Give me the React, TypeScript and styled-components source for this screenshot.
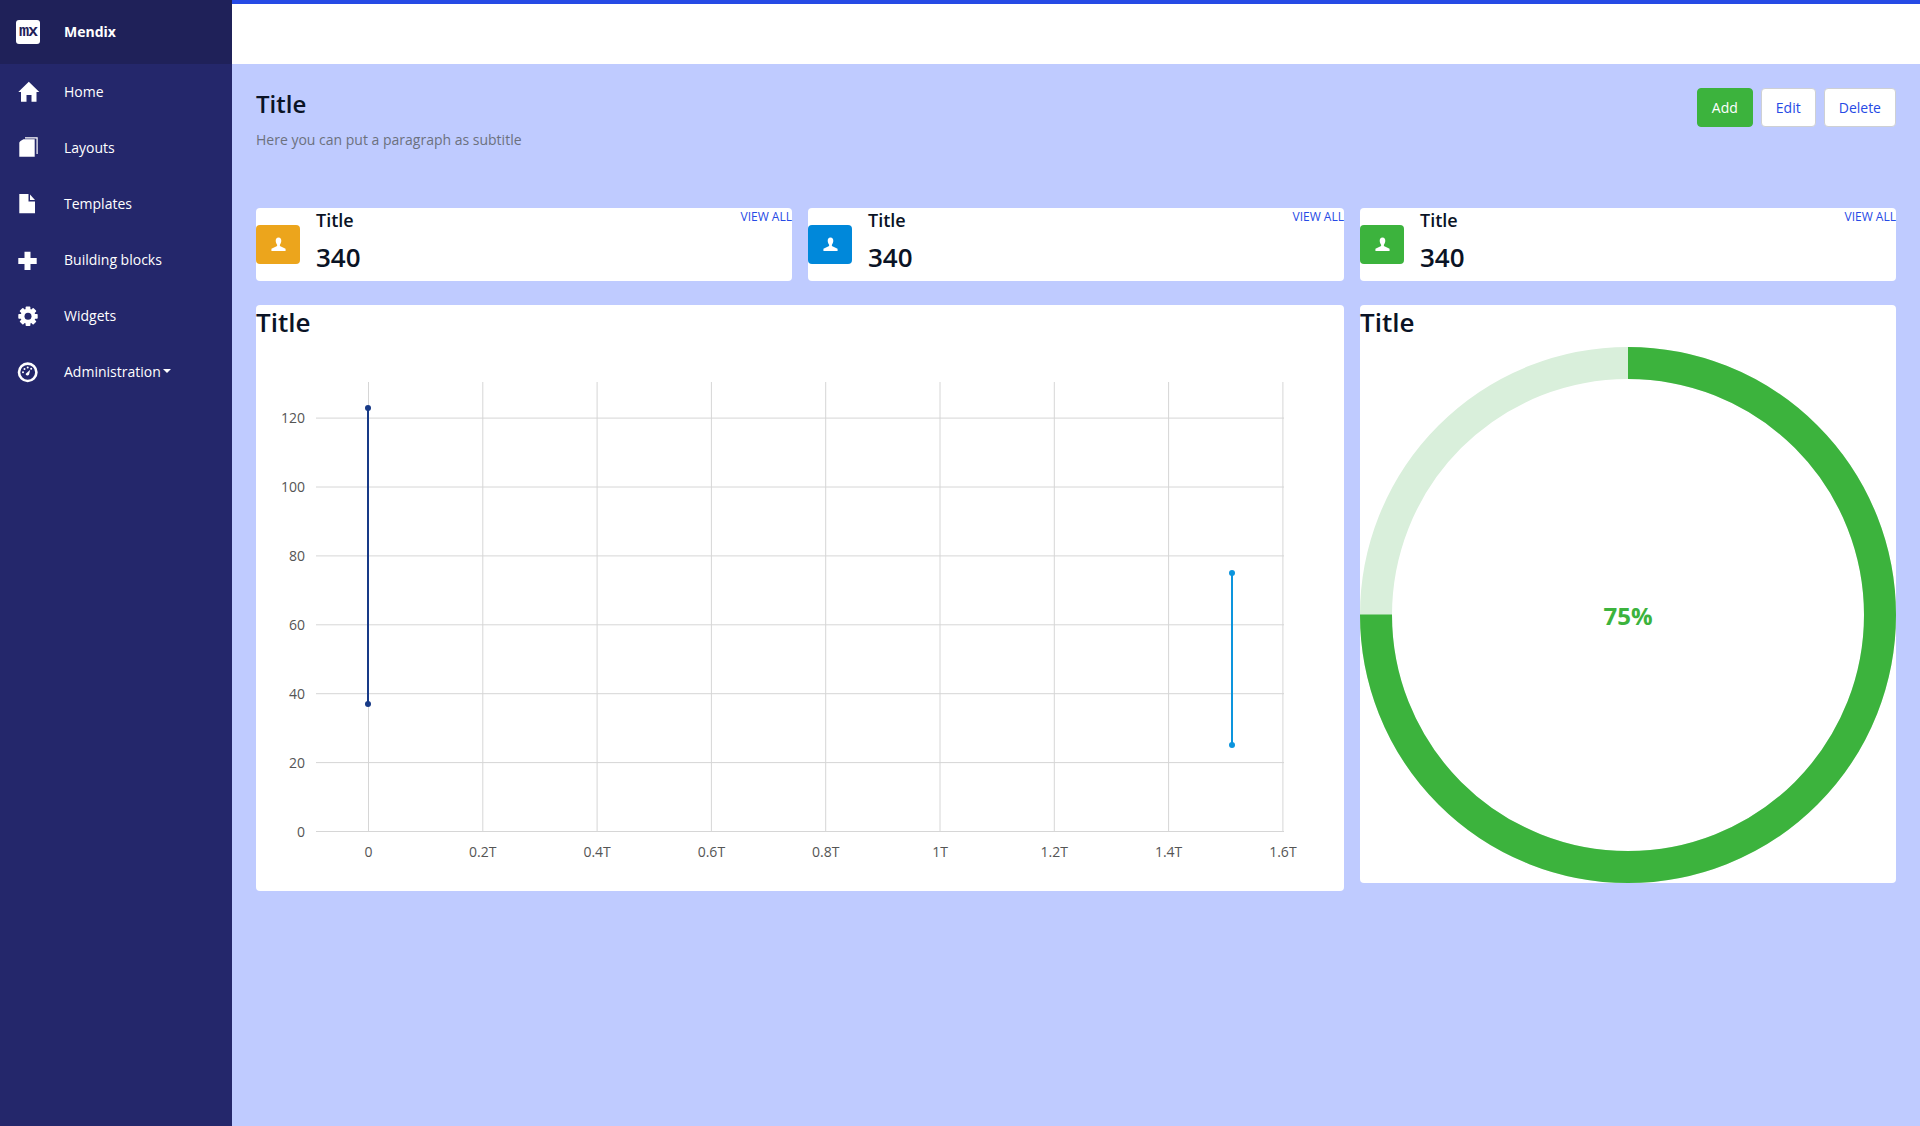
import { FC } from "react";
import styled, { createGlobalStyle } from "styled-components";

const GlobalStyle = createGlobalStyle`
  html, body {
    margin: 0;
    padding: 0;
  }

  body {
    background: #bfcbff;
    color: #0a1325;
    font-family: "Open Sans", sans-serif;
    font-size: 14px;
  }

  * {
    box-sizing: border-box;
  }
`;

const HomeIcon: FC = () => (
  <svg width="24" height="24" viewBox="0 0 24 24" fill="#fff">
    <path d="M12.8 2.7 L23.3 13 H20.5 V22.7 H15.5 V16 H10.5 V22.7 H5 V13 H2.3 Z" />
  </svg>
);

const BookIcon: FC = () => (
  <svg width="24" height="24" viewBox="0 0 24 24" fill="#fff">
    <path d="M3.3 7.8 Q3.3 6.8 4.5 5.9 L7.5 4.2 H18.7 V21.7 H3.3 Z" />
    <path d="M9 2.3 H21.7 V19 H20.5 V3.4 H9 Z" />
  </svg>
);

const FileIcon: FC = () => (
  <svg width="24" height="24" viewBox="0 0 24 24" fill="#fff">
    <path d="M3.3 3 H12.5 V10.5 H19 V22.3 H3.3 Z" />
    <path d="M14 3.5 L19 9 H14 Z" />
  </svg>
);

const PlusIcon: FC = () => (
  <svg width="24" height="24" viewBox="0 0 24 24" fill="#fff">
    <path d="M8.5 4.7 H14.5 V11 H20.7 V17 H14.5 V23 H8.5 V17 H2.3 V11 H8.5 Z" />
  </svg>
);

const GearIcon: FC = () => (
  <svg width="24" height="24" viewBox="0 0 24 24">
    <g fill="#fff">
      <circle cx="12" cy="13.3" r="7.5" />
      {[0, 45, 90, 135, 180, 225, 270, 315].map((deg) => (
        <rect
          key={deg}
          x="9.6"
          y="3.6"
          width="4.8"
          height="5"
          rx="0.8"
          transform={`rotate(${deg} 12 13.3)`}
        />
      ))}
    </g>
    <circle cx="12" cy="13.3" r="3.5" fill="#24276b" />
  </svg>
);

const GaugeIcon: FC = () => (
  <svg width="24" height="24" viewBox="0 0 24 24">
    <circle cx="11.7" cy="13.3" r="8.7" fill="none" stroke="#fff" strokeWidth="2.6" />
    <g fill="#fff">
      <circle cx="7" cy="13.3" r="1" />
      <circle cx="8.5" cy="9.9" r="1" />
      <circle cx="11.7" cy="8.5" r="1" />
      <circle cx="15.2" cy="9.7" r="1" />
      <path d="M9.8 14.7 L14.2 10.7 L13 15.7 Q12 16.9 10.6 16.3 Q9.4 15.7 9.8 14.7 Z" />
    </g>
  </svg>
);

const UserIcon: FC = () => (
  <svg width="15" height="15" viewBox="0 0 14 14" fill="#fff">
    <path d="M7 0.5 C8.9 0.5 9.6 2 9.6 3.6 C9.6 5.2 8.9 6.6 8.3 7.3 L8.3 8.4 L13.6 11 L13.6 13 L0.4 13 L0.4 11 L5.7 8.4 L5.7 7.3 C5.1 6.6 4.4 5.2 4.4 3.6 C4.4 2 5.1 0.5 7 0.5 Z" />
  </svg>
);

const menuItems = [
  { label: "Home", icon: <HomeIcon /> },
  { label: "Layouts", icon: <BookIcon /> },
  { label: "Templates", icon: <FileIcon /> },
  { label: "Building blocks", icon: <PlusIcon /> },
  { label: "Widgets", icon: <GearIcon /> },
  { label: "Administration", icon: <GaugeIcon />, caret: true },
];

const statCards = [{ color: "#eca51c" }, { color: "#0088da" }, { color: "#3cb33d" }];

const xTicks = ["0", "0.2T", "0.4T", "0.6T", "0.8T", "1T", "1.2T", "1.4T", "1.6T"];
const yTicks = [0, 20, 40, 60, 80, 100, 120];

// chart coordinates, relative to the svg that starts at the card's top-left
const xAt = (i: number) => 112.5 + i * 114.3;
const yAt = (value: number) => 526.5 - (value / 20) * 68.9;

const LineChart: FC = () => (
  <ChartSvg width="1088" height="586" viewBox="0 0 1088 586">
    {xTicks.map((tick, i) => (
      <g key={tick}>
        <line x1={xAt(i)} x2={xAt(i)} y1="77" y2="526.5" stroke="#d6d6d6" />
        <ChartLabel x={xAt(i)} y="552" textAnchor="middle">
          {tick}
        </ChartLabel>
      </g>
    ))}
    {yTicks.map((tick) => (
      <g key={tick}>
        <line x1="60" x2="1028" y1={yAt(tick)} y2={yAt(tick)} stroke="#d6d6d6" />
        <ChartLabel x="49" y={yAt(tick) + 5} textAnchor="end">
          {tick}
        </ChartLabel>
      </g>
    ))}
    <line x1="112" x2="112" y1="103" y2="399" stroke="#183a87" strokeWidth="2" />
    <circle cx="112" cy="103" r="3" fill="#183a87" />
    <circle cx="112" cy="399" r="3" fill="#183a87" />
    <line x1="976" x2="976" y1="268" y2="440" stroke="#0d95dd" strokeWidth="2" />
    <circle cx="976" cy="268" r="3" fill="#0d95dd" />
    <circle cx="976" cy="440" r="3" fill="#0d95dd" />
  </ChartSvg>
);

const Donut: FC<{ percent: number }> = ({ percent }) => {
  const radius = 252;
  const circumference = 2 * Math.PI * radius;
  return (
    <DonutWrap>
      <svg width="536" height="536" viewBox="0 0 536 536">
        <circle cx="268" cy="268" r={radius} fill="none" stroke="#d9efdb" strokeWidth="32" />
        <circle
          cx="268"
          cy="268"
          r={radius}
          fill="none"
          stroke="#3cb33d"
          strokeWidth="32"
          strokeDasharray={`${(circumference * percent) / 100} ${circumference}`}
          transform="rotate(-90 268 268)"
        />
      </svg>
      <DonutValue>{percent}%</DonutValue>
    </DonutWrap>
  );
};

const App: FC = () => (
  <>
    <GlobalStyle />
    <Layout>
      <Sidebar>
        <Brand>
          <BrandLogo>mx</BrandLogo>
          <BrandName>Mendix</BrandName>
        </Brand>
        <Menu>
          {menuItems.map((item) => (
            <MenuItem key={item.label}>
              <MenuIcon>{item.icon}</MenuIcon>
              <span>{item.label}</span>
              {item.caret && <Caret />}
            </MenuItem>
          ))}
        </Menu>
      </Sidebar>
      <Content>
        <Topbar />
        <Main>
          <PageHeader>
            <div>
              <PageTitle>Title</PageTitle>
              <PageSubtitle>Here you can put a paragraph as subtitle</PageSubtitle>
            </div>
            <Actions>
              <ActionButton $primary>Add</ActionButton>
              <ActionButton>Edit</ActionButton>
              <ActionButton>Delete</ActionButton>
            </Actions>
          </PageHeader>
          <StatRow>
            {statCards.map((card) => (
              <StatCard key={card.color}>
                <StatIcon $color={card.color}>
                  <UserIcon />
                </StatIcon>
                <StatBody>
                  <StatTitle>Title</StatTitle>
                  <StatValue>340</StatValue>
                </StatBody>
                <ViewAll>VIEW ALL</ViewAll>
              </StatCard>
            ))}
          </StatRow>
          <ChartRow>
            <ChartCard $height={586}>
              <CardTitle>Title</CardTitle>
              <LineChart />
            </ChartCard>
            <ChartCard $height={578}>
              <CardTitle>Title</CardTitle>
              <Donut percent={75} />
            </ChartCard>
          </ChartRow>
        </Main>
      </Content>
    </Layout>
  </>
);

const Layout = styled.div`
  display: flex;
  min-height: 1126px;
`;

const Sidebar = styled.aside`
  flex: 0 0 232px;
  background: #24276b;
`;

const Brand = styled.div`
  display: flex;
  align-items: center;
  height: 64px;
  padding: 0 0 1px 16px;
  gap: 24px;
  background: #1f2159;
`;

const BrandLogo = styled.div`
  display: flex;
  align-items: center;
  justify-content: center;
  width: 24px;
  height: 24px;
  border-radius: 3px;
  background: #fff;
  color: #1f2159;
  font-family: "Liberation Mono", monospace;
  font-size: 17px;
  font-weight: 700;
  letter-spacing: -1.2px;
`;

const BrandName = styled.div`
  color: #fff;
  font-size: 14px;
  font-weight: 700;
`;

const Menu = styled.nav`
  display: flex;
  flex-direction: column;
`;

const MenuItem = styled.div`
  display: flex;
  align-items: center;
  height: 56px;
  padding: 0 0 2px 16px;
  color: #fff;
  font-size: 14px;
  font-weight: 500;
`;

const MenuIcon = styled.div`
  display: flex;
  flex: 0 0 48px;
`;

const Caret = styled.i`
  width: 0;
  height: 0;
  margin-left: 2px;
  border-top: 4px solid #fff;
  border-left: 4px solid transparent;
  border-right: 4px solid transparent;
`;

const Content = styled.div`
  flex: 1;
  min-width: 0;
`;

const Topbar = styled.header`
  height: 64px;
  background: #fff;
  border-top: 4px solid #264ae5;
`;

const Main = styled.main`
  padding: 24px;
`;

const PageHeader = styled.div`
  display: flex;
  justify-content: space-between;
  align-items: flex-start;
  height: 120px;
`;

const PageTitle = styled.h1`
  margin: 0;
  font-size: 24px;
  font-weight: 600;
  line-height: 32px;
`;

const PageSubtitle = styled.p`
  margin: 10px 0 0;
  color: #6c717e;
  font-size: 14px;
  line-height: 20px;
`;

const Actions = styled.div`
  display: flex;
  gap: 8px;
`;

const ActionButton = styled.button<{ $primary?: boolean }>`
  height: 39px;
  padding: 0 14px;
  border: 1px solid ${(props) => (props.$primary ? "#3cb33d" : "#ced0d3")};
  border-radius: 4px;
  background: ${(props) => (props.$primary ? "#3cb33d" : "#fff")};
  color: ${(props) => (props.$primary ? "#fff" : "#264ae5")};
  font-family: "Open Sans", sans-serif;
  font-size: 14px;
  font-weight: 400;
`;

const StatRow = styled.div`
  display: grid;
  grid-template-columns: repeat(3, 1fr);
  gap: 16px;
`;

const StatCard = styled.div`
  position: relative;
  display: flex;
  align-items: center;
  height: 73px;
  border-radius: 4px;
  background: #fff;
`;

const StatIcon = styled.div<{ $color: string }>`
  display: flex;
  align-items: center;
  justify-content: center;
  width: 44px;
  height: 39px;
  border-radius: 4px;
  background: ${(props) => props.$color};
`;

const StatBody = styled.div`
  align-self: flex-start;
  margin-left: 16px;
`;

const StatTitle = styled.div`
  font-size: 18px;
  font-weight: 600;
  line-height: 24px;
`;

const StatValue = styled.div`
  margin-top: 9px;
  font-size: 26px;
  font-weight: 600;
  line-height: 32px;
`;

const ViewAll = styled.a`
  position: absolute;
  top: 1px;
  right: 0;
  color: #264ae5;
  font-size: 12px;
  line-height: 16px;
`;

const ChartRow = styled.div`
  display: grid;
  grid-template-columns: 1088px 536px;
  align-items: start;
  gap: 16px;
  margin-top: 24px;
`;

const ChartCard = styled.section<{ $height: number }>`
  position: relative;
  height: ${(props) => props.$height}px;
  border-radius: 4px;
  background: #fff;
`;

const CardTitle = styled.h2`
  position: relative;
  height: 42px;
  margin: 0;
  font-size: 26px;
  font-weight: 600;
  line-height: 34px;
`;

const ChartSvg = styled.svg`
  position: absolute;
  top: 0;
  left: 0;
`;

const ChartLabel = styled.text`
  fill: #555;
  font-family: "Open Sans", sans-serif;
  font-size: 14px;
`;

const DonutWrap = styled.div`
  position: relative;
  display: flex;
  width: 536px;
  height: 536px;
`;

const DonutValue = styled.div`
  position: absolute;
  inset: 0;
  display: flex;
  align-items: center;
  justify-content: center;
  color: #3cb33d;
  font-size: 24px;
  font-weight: 700;
`;

export default App;
